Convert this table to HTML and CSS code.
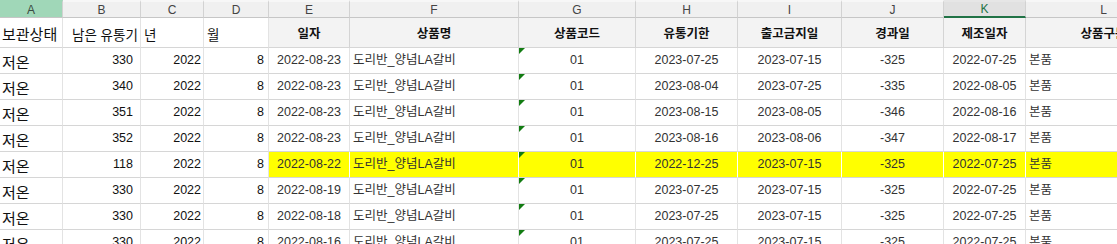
FILE: index.html
```html
<!DOCTYPE html>
<html lang="ko">
<head>
<meta charset="utf-8">
<link rel="stylesheet" href="styles.css">
</head>
<body>
<div class="sheet">
  <div class="ch sel-a">A</div><div class="ch">B</div><div class="ch">C</div><div class="ch">D</div><div class="ch">E</div><div class="ch">F</div><div class="ch">G</div><div class="ch">H</div><div class="ch">I</div><div class="ch">J</div><div class="ch sel-k">K</div><div class="ch">L</div>

  <div class="c big r1">보관상태</div><div class="c ko r1 pad-b">남은 유통기</div><div class="c ko r1">년</div><div class="c ko r1">월</div><div class="c hd">일자</div><div class="c hd">상품명</div><div class="c hd">상품코드</div><div class="c hd">유통기한</div><div class="c hd">출고금지일</div><div class="c hd">경과일</div><div class="c hd">제조일자</div><div class="c hd">상품구분</div>

  <div class="c big">저온</div><div class="c num nb">330</div><div class="c num nc">2022</div><div class="c num nd">8</div><div class="c ctr">2022-08-23</div><div class="c lft">도리반_양념LA갈비</div><div class="c ctr code">01</div><div class="c ctr">2023-07-25</div><div class="c ctr">2023-07-15</div><div class="c ctr">-325</div><div class="c ctr">2022-07-25</div><div class="c lft">본품</div>

  <div class="c big">저온</div><div class="c num nb">340</div><div class="c num nc">2022</div><div class="c num nd">8</div><div class="c ctr">2022-08-23</div><div class="c lft">도리반_양념LA갈비</div><div class="c ctr code">01</div><div class="c ctr">2023-08-04</div><div class="c ctr">2023-07-25</div><div class="c ctr">-335</div><div class="c ctr">2022-08-05</div><div class="c lft">본품</div>

  <div class="c big">저온</div><div class="c num nb">351</div><div class="c num nc">2022</div><div class="c num nd">8</div><div class="c ctr">2022-08-23</div><div class="c lft">도리반_양념LA갈비</div><div class="c ctr code">01</div><div class="c ctr">2023-08-15</div><div class="c ctr">2023-08-05</div><div class="c ctr">-346</div><div class="c ctr">2022-08-16</div><div class="c lft">본품</div>

  <div class="c big">저온</div><div class="c num nb">352</div><div class="c num nc">2022</div><div class="c num nd">8</div><div class="c ctr">2022-08-23</div><div class="c lft">도리반_양념LA갈비</div><div class="c ctr code">01</div><div class="c ctr">2023-08-16</div><div class="c ctr">2023-08-06</div><div class="c ctr">-347</div><div class="c ctr">2022-08-17</div><div class="c lft">본품</div>

  <div class="c big">저온</div><div class="c num nb">118</div><div class="c num nc">2022</div><div class="c num nd">8</div><div class="c ctr hl">2022-08-22</div><div class="c lft hl">도리반_양념LA갈비</div><div class="c ctr code hl">01</div><div class="c ctr hl">2022-12-25</div><div class="c ctr hl">2023-07-15</div><div class="c ctr hl">-325</div><div class="c ctr hl">2022-07-25</div><div class="c lft hl">본품</div>

  <div class="c big">저온</div><div class="c num nb">330</div><div class="c num nc">2022</div><div class="c num nd">8</div><div class="c ctr">2022-08-19</div><div class="c lft">도리반_양념LA갈비</div><div class="c ctr code">01</div><div class="c ctr">2023-07-25</div><div class="c ctr">2023-07-15</div><div class="c ctr">-325</div><div class="c ctr">2022-07-25</div><div class="c lft">본품</div>

  <div class="c big">저온</div><div class="c num nb">330</div><div class="c num nc">2022</div><div class="c num nd">8</div><div class="c ctr">2022-08-18</div><div class="c lft">도리반_양념LA갈비</div><div class="c ctr code">01</div><div class="c ctr">2023-07-25</div><div class="c ctr">2023-07-15</div><div class="c ctr">-325</div><div class="c ctr">2022-07-25</div><div class="c lft">본품</div>

  <div class="c big">저온</div><div class="c num nb">330</div><div class="c num nc">2022</div><div class="c num nd">8</div><div class="c ctr">2022-08-16</div><div class="c lft">도리반_양념LA갈비</div><div class="c ctr code">01</div><div class="c ctr">2023-07-25</div><div class="c ctr">2023-07-15</div><div class="c ctr">-325</div><div class="c ctr">2022-07-25</div><div class="c lft">본품</div>
</div>
</body>
</html>
```

FILE: styles.css
```css
html, body {
  margin: 0;
  padding: 0;
  background: #ffffff;
  overflow: hidden;
}

.sheet {
  display: grid;
  grid-template-columns: 63px 78px 63px 65px 81px 169px 117px 102px 104px 102px 82px 156px;
  grid-template-rows: 18px 30px repeat(8, 26px);
  width: max-content;
  font-family: "Liberation Sans", "Noto Sans CJK KR", Arial, sans-serif;
  font-size: 12.5px;
  color: #222;
}

.ch {
  box-sizing: border-box;
  background: #f0f0f0;
  border-top: 2px solid #f7f7f7;
  border-right: 1px solid #d2d2d2;
  border-bottom: 1px solid #c6c6c6;
  color: #444;
  font-size: 12px;
  display: flex;
  align-items: center;
  justify-content: center;
  line-height: 1;
}

.ch.sel-a {
  background: #a0d7b8;
  border-top-color: #a0d7b8;
  color: #3a4a40;
}

.ch.sel-k {
  background: #e1e1e1;
  border-top-color: #e6e6e6;
  border-bottom: 2px solid #217346;
  color: #217346;
}

.c {
  box-sizing: border-box;
  border-right: 1px solid #e3e3e3;
  border-bottom: 1px solid #d6d6d6;
  display: flex;
  align-items: center;
  white-space: nowrap;
  overflow: hidden;
  position: relative;
  line-height: 1;
  padding: 0 3px;
}

.big {
  font-family: "Noto Sans CJK KR", "Liberation Sans", sans-serif;
  font-size: 15px;
  color: #111;
  padding-left: 2px;
  padding-top: 1px;
}

.ko {
  font-family: "Noto Sans CJK KR", "Liberation Sans", sans-serif;
  font-size: 13.5px;
  color: #111;
  padding-top: 4px;
}

.pad-b { padding-left: 9px; }

.hd {
  background: #f3f3f3;
  border-right-color: #d4d4d4;
  justify-content: center;
  font-family: "Noto Sans CJK KR", "Liberation Sans", sans-serif;
  font-weight: 700;
  font-size: 12.5px;
  color: #111;
  padding-top: 2px;
}

.num {
  justify-content: flex-end;
  color: #111;
}
.nb { padding-right: 7px; }
.nc { padding-right: 2px; }
.nd { padding-right: 4px; }

.ctr {
  justify-content: center;
  color: #333;
}

.lft {
  justify-content: flex-start;
  color: #333;
  font-family: "Liberation Sans", "Noto Sans CJK KR", sans-serif;
}

.hl {
  background: #ffff00;
  border-right-color: #ffffff;
}

.code::before {
  content: "";
  position: absolute;
  left: 0;
  top: 0;
  width: 6px;
  height: 6px;
  background: #127c12;
  clip-path: polygon(0 0, 100% 0, 0 100%);
}
```
